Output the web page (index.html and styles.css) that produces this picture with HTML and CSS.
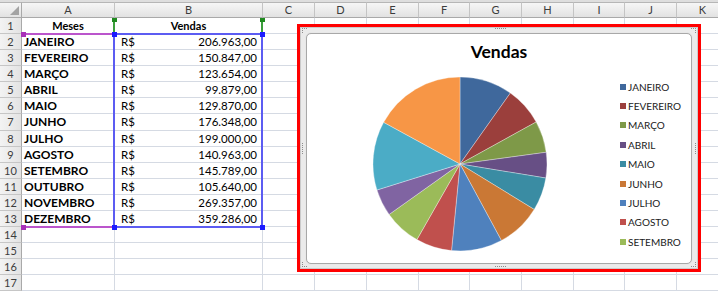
FILE: index.html
```html
<!DOCTYPE html>
<html lang="pt">
<head>
    <meta charset="UTF-8">
    <title>Vendas</title>
    <link rel="stylesheet" href="styles.css">
</head>
<body>
<div class="sheet">
    <div class="row top">
        <div class="corner"><svg width="9" height="9" viewBox="0 0 9 9"><polygon points="9,0 9,9 0,9" fill="#a3a3a3"/></svg></div>
        <div>A</div><div>B</div><div>C</div><div>D</div><div>E</div><div>F</div><div>G</div><div>H</div><div>I</div><div>J</div><div>K</div>
    </div>
    <div class="row">
        <div class="rh">1</div><div class="b mid">Meses</div><div class="b mid">Vendas</div>
        <div></div><div></div><div></div><div></div><div></div><div></div><div></div><div></div><div></div>
    </div>
    <div class="row">
        <div class="rh">2</div><div class="b m">JANEIRO</div><div class="val"><span>R$</span><span>206.963,00</span></div>
        <div></div><div></div><div></div><div></div><div></div><div></div><div></div><div></div><div></div>
    </div>
    <div class="row">
        <div class="rh">3</div><div class="b m">FEVEREIRO</div><div class="val"><span>R$</span><span>150.847,00</span></div>
        <div></div><div></div><div></div><div></div><div></div><div></div><div></div><div></div><div></div>
    </div>
    <div class="row">
        <div class="rh">4</div><div class="b m">MARÇO</div><div class="val"><span>R$</span><span>123.654,00</span></div>
        <div></div><div></div><div></div><div></div><div></div><div></div><div></div><div></div><div></div>
    </div>
    <div class="row">
        <div class="rh">5</div><div class="b m">ABRIL</div><div class="val"><span>R$</span><span>99.879,00</span></div>
        <div></div><div></div><div></div><div></div><div></div><div></div><div></div><div></div><div></div>
    </div>
    <div class="row">
        <div class="rh">6</div><div class="b m">MAIO</div><div class="val"><span>R$</span><span>129.870,00</span></div>
        <div></div><div></div><div></div><div></div><div></div><div></div><div></div><div></div><div></div>
    </div>
    <div class="row tall">
        <div class="rh">7</div><div class="b m">JUNHO</div><div class="val"><span>R$</span><span>176.348,00</span></div>
        <div></div><div></div><div></div><div></div><div></div><div></div><div></div><div></div><div></div>
    </div>
    <div class="row">
        <div class="rh">8</div><div class="b m">JULHO</div><div class="val"><span>R$</span><span>199.000,00</span></div>
        <div></div><div></div><div></div><div></div><div></div><div></div><div></div><div></div><div></div>
    </div>
    <div class="row">
        <div class="rh">9</div><div class="b m">AGOSTO</div><div class="val"><span>R$</span><span>140.963,00</span></div>
        <div></div><div></div><div></div><div></div><div></div><div></div><div></div><div></div><div></div>
    </div>
    <div class="row">
        <div class="rh">10</div><div class="b m">SETEMBRO</div><div class="val"><span>R$</span><span>145.789,00</span></div>
        <div></div><div></div><div></div><div></div><div></div><div></div><div></div><div></div><div></div>
    </div>
    <div class="row">
        <div class="rh">11</div><div class="b m">OUTUBRO</div><div class="val"><span>R$</span><span>105.640,00</span></div>
        <div></div><div></div><div></div><div></div><div></div><div></div><div></div><div></div><div></div>
    </div>
    <div class="row">
        <div class="rh">12</div><div class="b m">NOVEMBRO</div><div class="val"><span>R$</span><span>269.357,00</span></div>
        <div></div><div></div><div></div><div></div><div></div><div></div><div></div><div></div><div></div>
    </div>
    <div class="row">
        <div class="rh">13</div><div class="b m">DEZEMBRO</div><div class="val"><span>R$</span><span>359.286,00</span></div>
        <div></div><div></div><div></div><div></div><div></div><div></div><div></div><div></div><div></div>
    </div>
    <div class="row">
        <div class="rh">14</div><div></div><div></div>
        <div></div><div></div><div></div><div></div><div></div><div></div><div></div><div></div><div></div>
    </div>
    <div class="row">
        <div class="rh">15</div><div></div><div></div>
        <div></div><div></div><div></div><div></div><div></div><div></div><div></div><div></div><div></div>
    </div>
    <div class="row">
        <div class="rh">16</div><div></div><div></div>
        <div></div><div></div><div></div><div></div><div></div><div></div><div></div><div></div><div></div>
    </div>
    <div class="row">
        <div class="rh">17</div><div></div><div></div>
        <div></div><div></div><div></div><div></div><div></div><div></div><div></div><div></div><div></div>
    </div>

    <!-- realce dos intervalos do grafico -->
    <span class="mark green-l"></span>
    <span class="mark green-r"></span>
    <span class="mark sq green-sq1"></span>
    <span class="mark sq green-sq2"></span>
    <span class="mark purple-t"></span>
    <span class="mark purple-b"></span>
    <span class="mark sq purple-sq1"></span>
    <span class="mark sq purple-sq2"></span>
    <span class="mark blue-box"></span>
    <span class="mark sq blue-sq1"></span>
    <span class="mark sq blue-sq2"></span>
    <span class="mark sq blue-sq3"></span>
    <span class="mark sq blue-sq4"></span>

    <div class="chart">
        <div class="frame">
            <span class="hdl h-top"></span>
            <span class="hdl h-bottom"></span>
            <span class="hdl h-left"></span>
            <span class="hdl h-right"></span>
            <span class="hdl c-tl"></span>
            <span class="hdl c-tr"></span>
            <span class="hdl c-bl"></span>
            <span class="hdl c-br"></span>
            <div class="area">
                <h1 class="title">Vendas</h1>
                <div class="plot">
                    <svg class="pie" width="176" height="176" viewBox="-88 -88 176 176">
                        <g stroke="#fff" stroke-width="0.6" stroke-opacity="0.55">
                            <path fill="#3f689c" d="M0 0L0 -87A87 87 0 0 1 50.34 -70.97Z"/>
                            <path fill="#9b3f3c" d="M0 0L50.34 -70.97A87 87 0 0 1 76.18 -42.02Z"/>
                            <path fill="#7e9948" d="M0 0L76.18 -42.02A87 87 0 0 1 86.21 -11.75Z"/>
                            <path fill="#674f85" d="M0 0L86.21 -11.75A87 87 0 0 1 85.86 14.06Z"/>
                            <path fill="#3a8ca3" d="M0 0L85.86 14.06A87 87 0 0 1 74.19 45.43Z"/>
                            <path fill="#ca7835" d="M0 0L74.19 45.43A87 87 0 0 1 41.38 76.53Z"/>
                            <path fill="#4f81bd" d="M0 0L41.38 76.53A87 87 0 0 1 -8.48 86.59Z"/>
                            <path fill="#c0504d" d="M0 0L-8.48 86.59A87 87 0 0 1 -43.07 75.59Z"/>
                            <path fill="#9bbb59" d="M0 0L-43.07 75.59A87 87 0 0 1 -70.89 50.43Z"/>
                            <path fill="#8064a2" d="M0 0L-70.89 50.43A87 87 0 0 1 -83.03 25.99Z"/>
                            <path fill="#4bacc6" d="M0 0L-83.03 25.99A87 87 0 0 1 -76.36 -41.68Z"/>
                            <path fill="#f79646" d="M0 0L-76.36 -41.68A87 87 0 0 1 0 -87Z"/>
                        </g>
                    </svg>
                    <ul class="legend">
                        <li><i style="background:#3f689c"></i>JANEIRO</li>
                        <li><i style="background:#9b3f3c"></i>FEVEREIRO</li>
                        <li><i style="background:#7e9948"></i>MARÇO</li>
                        <li><i style="background:#674f85"></i>ABRIL</li>
                        <li><i style="background:#3a8ca3"></i>MAIO</li>
                        <li><i style="background:#ca7835"></i>JUNHO</li>
                        <li><i style="background:#4f81bd"></i>JULHO</li>
                        <li><i style="background:#c0504d"></i>AGOSTO</li>
                        <li><i style="background:#9bbb59"></i>SETEMBRO</li>
                    </ul>
                </div>
            </div>
        </div>
    </div>
</div>
</body>
</html>
```

FILE: styles.css
```css
*{ margin: 0; padding: 0; box-sizing: border-box;}
body{ width: 718px; height: 291px; overflow: hidden; background: #fff; color: #000;
    font: 11px "Lato", "Noto Sans", sans-serif;}

/* planilha */
.sheet{ position: relative; padding-top: 2px; background: #dedede;}
.row{ display: grid; height: 16px; background: #fff;
    grid-template-columns: 22px 93px 148px 52px 52px 52px 51px 52px 52px 51px 52px 52px;}
.row.tall{ height: 17px;}
.row>div{ border-right: 1px solid #d5dae3; border-bottom: 1px solid #d5dae3; line-height: 15px;
    white-space: nowrap; overflow: hidden; padding-left: 2px;}
.row.tall>div{ line-height: 16px;}
.row.top>div{ background: linear-gradient(#f6f6f6, #e2e2e2); border-top: 1px solid #b6b6b6;
    border-right-color: #c4c4c4; border-bottom-color: #a9a9a9; text-align: center; color: #3c3c3c;
    line-height: 13px; padding: 0;}
.row.top>.corner{ border-right-color: #a9a9a9; display: flex; align-items: flex-end; justify-content: flex-end;
    padding: 0 2px 2px 0;}
.row>.rh{ background: linear-gradient(90deg, #f3f3f3, #e3e3e3); border-right-color: #a9a9a9;
    border-bottom-color: #c6c6c6; text-align: center; color: #3c3c3c; padding: 0;}
.b{ font-weight: bold;}
.m{ font-size: 12px;}
.row>.mid{ text-align: center; padding: 0;}
.row>.val{ display: flex; justify-content: space-between; padding: 0 5px 0 6px; font-size: 11.5px;}

/* realce dos intervalos */
.mark{ position: absolute; display: block;}
.sq{ width: 5px; height: 5px;}
.green-l{ left: 113px; top: 18px; width: 2px; height: 16px; background: #3c9e3c;}
.green-r{ left: 261px; top: 18px; width: 2px; height: 16px; background: #3c9e3c;}
.green-sq1{ left: 112px; top: 18px; height: 4px; background: #1f8a1f;}
.green-sq2{ left: 260px; top: 18px; height: 4px; background: #1f8a1f;}
.purple-t{ left: 22px; top: 33px; width: 92px; height: 2px; background: #bb55cc;}
.purple-b{ left: 22px; top: 226px; width: 92px; height: 2px; background: #bb55cc;}
.purple-sq1{ left: 21px; top: 32px; background: #a830b8;}
.purple-sq2{ left: 21px; top: 225px; background: #a830b8;}
.blue-box{ left: 113px; top: 33px; width: 150px; height: 195px; border: 2px solid #5c5cf2;}
.blue-sq1{ left: 112px; top: 32px; background: #1c1cff;}
.blue-sq2{ left: 260px; top: 32px; background: #1c1cff;}
.blue-sq3{ left: 112px; top: 225px; background: #1c1cff;}
.blue-sq4{ left: 260px; top: 225px; background: #1c1cff;}

/* grafico */
.chart{ position: absolute; left: 297px; top: 24px; width: 404px; height: 248px; border: 3px solid #ff0000;}
.frame{ position: relative; height: 100%; background: #ebebeb; border: 1px solid #cbcbcb; padding: 5px 5px 4px 5px;}
.area{ height: 100%; background: #fff; border: 1px solid #a8a8a8; border-radius: 5px;
    box-shadow: 0 0 1px #c8c8c8;}
.title{ font: bold 17.5px/20px "Lato", "Noto Sans", sans-serif; text-align: center; margin: 8px 0 14px;}
.plot{ display: flex; align-items: flex-start;}
.pie{ display: block; margin-left: 65px;}
.legend{ list-style: none; margin: 1px 0 0 72px; font-size: 10px; color: #1a1a1a;}
.legend li{ display: flex; align-items: center; height: 19.375px;}
.legend i{ display: block; width: 6px; height: 6px; margin-right: 2px;}

/* alças de selecao */
.hdl{ position: absolute; display: block; border: 0 dotted #8c8c8c;}
.h-top{ left: 194px; top: 0; width: 11px; border-top-width: 1px;}
.h-bottom{ left: 194px; bottom: 1px; width: 11px; border-top-width: 1px;}
.h-left{ left: 1px; top: 115px; height: 11px; border-left-width: 1px;}
.h-right{ right: 1px; top: 115px; height: 11px; border-left-width: 1px;}
.c-tl{ left: 1px; top: 0; width: 5px; height: 5px; border-top-width: 1px; border-left-width: 1px;}
.c-tr{ right: 1px; top: 0; width: 5px; height: 5px; border-top-width: 1px; border-right-width: 1px;}
.c-bl{ left: 1px; bottom: 1px; width: 5px; height: 5px; border-bottom-width: 1px; border-left-width: 1px;}
.c-br{ right: 1px; bottom: 1px; width: 5px; height: 5px; border-bottom-width: 1px; border-right-width: 1px;}
```
